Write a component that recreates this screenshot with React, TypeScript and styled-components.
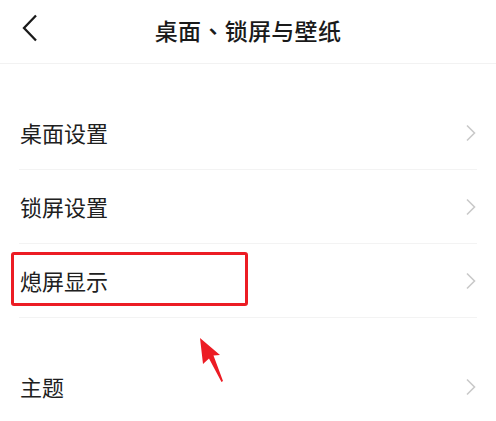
import React from 'react'
import styled, { createGlobalStyle } from 'styled-components'

//Global
const GlobalStyle = createGlobalStyle`
  html, body {
    margin: 0;
    padding: 0;
    background: #ffffff;
  }
  body {
    font-family: 'Noto Sans CJK SC', 'Noto Sans', sans-serif;
    color: #1c1c1c;
  }
`

//Styled Components
const Page = styled.div`
  width: 496px;
  height: 421px;
  overflow: hidden;
  background: #ffffff;
  position: relative;
`

const Header = styled.header`
  height: 63px;
  display: flex;
  align-items: center;
  justify-content: center;
  position: relative;
  border-bottom: 1px solid #f2f2f2;
`

const BackButton = styled.button`
  position: absolute;
  left: 14px;
  top: 11px;
  width: 32px;
  height: 34px;
  border: none;
  background: transparent;
  padding: 0;
  display: flex;
  align-items: center;
  justify-content: center;
`

const Title = styled.h1`
  margin: 0;
  font-size: 23px;
  font-weight: 500;
  line-height: 1;
  color: #1a1a1a;
  letter-spacing: 0.3px;
  transform: translateY(-1px);
`

// the comma sits centred in its box, as in a traditional-style face
const Comma = styled.span`
  font-family: 'Noto Sans CJK TC', 'Noto Sans CJK SC', sans-serif;
`

const Section = styled.section`
  margin-top: 32px;
`

const Row = styled.div<{ divider: boolean }>`
  height: 74px;
  margin: 0 19px;
  display: flex;
  align-items: center;
  justify-content: space-between;
  position: relative;
  border-bottom: ${(props) => (props.divider ? '1px solid #f3f3f3' : 'none')};
  box-sizing: border-box;
`

const Label = styled.span`
  font-size: 22px;
  line-height: 1;
  color: #202020;
  padding-left: 1px;
  transform: translateY(-1px);
`

const Highlight = styled.div`
  position: absolute;
  left: -8px;
  top: 8px;
  width: 237px;
  height: 54px;
  border: 3px solid #ec1c24;
  border-radius: 3px;
  box-sizing: border-box;
  pointer-events: none;
`

const Pointer = styled.svg`
  position: absolute;
  left: 196px;
  top: 334px;
`

//Icons
const BackIcon = () => (
  <svg width="18" height="28" viewBox="0 0 18 28">
    <path d="M15 1.5 L3 14 L15 26.5" fill="none" stroke="#1a1a1a" strokeWidth="2.3" />
  </svg>
)

const Chevron = () => (
  <svg width="12" height="18" viewBox="0 0 12 18">
    <path d="M2 1.5 L9.5 9 L2 16.5" fill="none" stroke="#c9c9c9" strokeWidth="1.6" />
  </svg>
)

//Data
const sections = [
  [
    { label: '桌面设置' },
    { label: '锁屏设置' },
    { label: '熄屏显示', marked: true },
  ],
  [{ label: '主题' }],
]

//React Component
const App: React.FC = () => {
  return (
    <Page>
      <GlobalStyle />
      <Header>
        <BackButton aria-label="返回">
          <BackIcon />
        </BackButton>
        <Title>
          桌面<Comma>、</Comma>锁屏与壁纸
        </Title>
      </Header>
      {sections.map((items, si) => (
        <Section key={si}>
          {items.map((item, i) => (
            <Row key={item.label} divider={i < items.length - 1 || si === 0}>
              <Label>{item.label}</Label>
              <Chevron />
              {item.marked && <Highlight />}
            </Row>
          ))}
        </Section>
      ))}
      <Pointer width="30" height="50" viewBox="0 0 30 50">
        <path
          d="M4 4 L24 21 L17.5 21.5 L27 47 L25.5 48 L13 24.5 L7 30 Z"
          fill="#ec1c24"
        />
      </Pointer>
    </Page>
  )
}
export default App
